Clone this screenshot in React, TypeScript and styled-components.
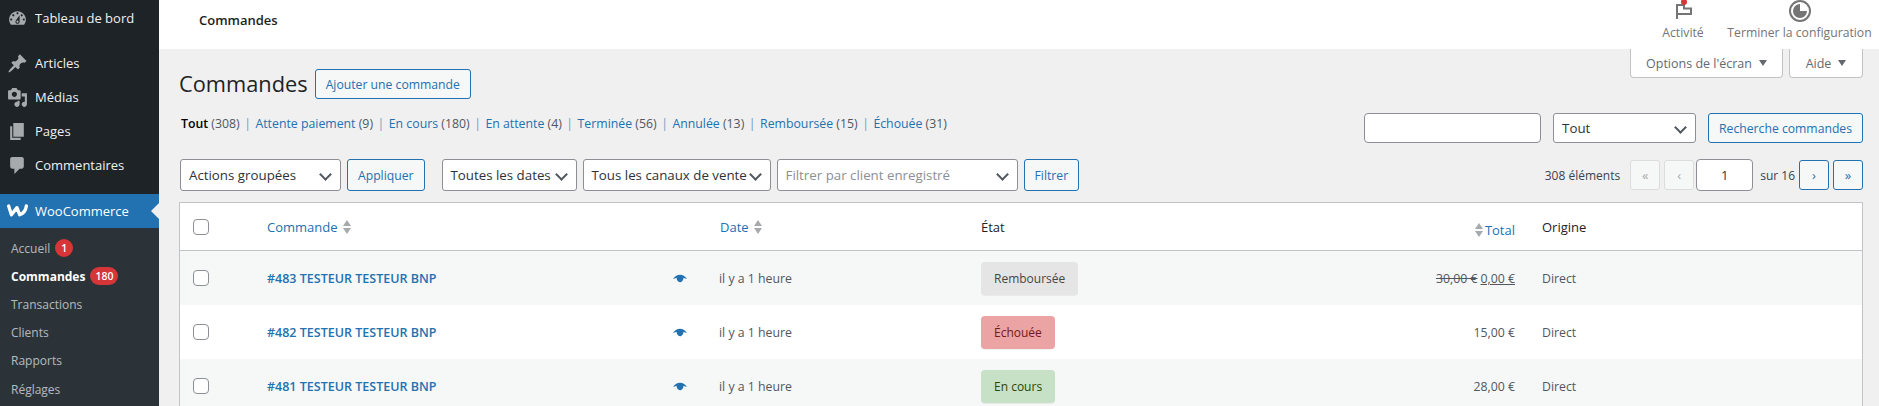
import React from "react";
import styled, { createGlobalStyle } from "styled-components";

const GlobalStyle = createGlobalStyle`
  html, body {
    margin: 0;
    padding: 0;
    height: 406px;
    overflow: hidden;
    background: #f0f0f1;
  }
  * {
    box-sizing: border-box;
  }
  body {
    font-family: "Open Sans", "Noto Sans", sans-serif;
    font-size: 12.5px;
    color: #3c434a;
  }
`;

const menuIcons = {
  dashboard:
    "M3.76 16h12.48c1.1-1.37 1.76-3.11 1.76-5 0-4.42-3.58-8-8-8s-8 3.58-8 8c0 1.89.66 3.63 1.76 5zM10 4c.55 0 1 .45 1 1s-.45 1-1 1-1-.45-1-1 .45-1 1-1zM6 6c.55 0 1 .45 1 1s-.45 1-1 1-1-.45-1-1 .45-1 1-1zm8 0c.55 0 1 .45 1 1s-.45 1-1 1-1-.45-1-1 .45-1 1-1zm-5.37 5.55L12 7v6c0 1.1-.9 2-2 2s-2-.9-2-2c0-.57.24-1.08.63-1.45zM4 10c.55 0 1 .45 1 1s-.45 1-1 1-1-.45-1-1 .45-1 1-1zm12 0c.55 0 1 .45 1 1s-.45 1-1 1-1-.45-1-1 .45-1 1-1zm-5 3c0-.55-.45-1-1-1s-1 .45-1 1 .45 1 1 1 1-.45 1-1z",
  post: "M10.44 3.02l1.82-1.82 6.36 6.35-1.83 1.82c-1.05-.68-2.48-.57-3.41.36l-.75.75c-.92.93-1.04 2.35-.35 3.41l-1.83 1.82-2.41-2.41-2.8 2.79c-.42.42-3.38 2.71-3.8 2.29s1.86-3.39 2.28-3.81l2.79-2.79L4.1 9.36l1.83-1.82c1.05.69 2.48.57 3.4-.36l.75-.75c.93-.92 1.05-2.35.36-3.41z",
  media:
    "M13 11V4c0-.55-.45-1-1-1h-1.67L9 1H5L3.67 3H2c-.55 0-1 .45-1 1v7c0 .55.45 1 1 1h10c.55 0 1-.45 1-1zM7 4.5c1.38 0 2.5 1.12 2.5 2.5S8.38 9.5 7 9.5 4.5 8.38 4.5 7 5.62 4.5 7 4.5zM14 6h5v10.5c0 1.38-1.12 2.5-2.5 2.5S14 17.88 14 16.5s1.12-2.5 2.5-2.5c.17 0 .34.02.5.05V9h-3V6zm-4 8.05V13h2v3.5c0 1.38-1.12 2.5-2.5 2.5S7 17.88 7 16.5 8.12 14 9.5 14c.17 0 .34.02.5.05z",
  page: "M6 15V2h10v13H6zm-1 1h8v2H3V5h2v11z",
  comment: "M5 2h9c1.1 0 2 .9 2 2v7c0 1.1-.9 2-2 2h-2l-5 5v-5H5c-1.1 0-2-.9-2-2V4c0-1.1.9-2 2-2z",
};

const Page = styled.div`
  display: flex;
  width: 1879px;
  height: 406px;
  overflow: hidden;
`;

const Sidebar = styled.nav`
  flex: 0 0 159px;
  background: #1d2327;
  display: flex;
  flex-direction: column;
`;

const MenuItem = styled.div<{ $gap?: number; $top?: number }>`
  flex: none;
  height: 34px;
  display: flex;
  align-items: center;
  gap: 7px;
  padding-left: 7px;
  margin-top: ${(p) => p.$top ?? 0}px;
  margin-bottom: ${(p) => p.$gap ?? 0}px;
  color: #f0f0f1;
  font-size: 13px;
  & svg {
    width: 21px;
    height: 21px;
    fill: #a7aaad;
    flex: none;
  }
`;

const WooItem = styled(MenuItem)`
  position: relative;
  background: #2271b1;
  color: #fff;
  margin-top: 12px;
  & svg {
    fill: none;
    stroke: #fff;
  }
  &::after {
    content: "";
    position: absolute;
    right: 0;
    top: 9px;
    border: 8px solid transparent;
    border-right-color: #f0f0f1;
    border-left-width: 0;
  }
`;

const SubMenu = styled.div`
  flex: 1;
  background: #2c3338;
  padding-top: 6px;
  display: flex;
  flex-direction: column;
`;

const SubItem = styled.div<{ $active?: boolean }>`
  flex: none;
  height: 28.2px;
  display: flex;
  align-items: center;
  gap: 5px;
  padding-left: 11px;
  font-size: 12px;
  color: ${(p) => (p.$active ? "#fff" : "rgba(240, 246, 252, 0.7)")};
  font-weight: ${(p) => (p.$active ? 700 : 400)};
`;

const Count = styled.span`
  min-width: 18px;
  height: 18px;
  padding: 0 5px;
  border-radius: 9px;
  background: #d63638;
  color: #fff;
  font-size: 10.5px;
  font-weight: 600;
  display: inline-flex;
  align-items: center;
  justify-content: center;
`;

const Main = styled.main`
  flex: 1;
  min-width: 0;
  display: flex;
  flex-direction: column;
`;

const Header = styled.header`
  flex: none;
  height: 49px;
  background: #fff;
  display: flex;
  align-items: center;
  justify-content: space-between;
  padding: 0 3px 0 40px;
`;

const HeaderTitle = styled.div`
  font-size: 13px;
  font-weight: 600;
  color: #1e1e1e;
  margin-top: -10px;
`;

const HeaderActions = styled.div`
  display: flex;
  align-self: flex-start;
`;

const HeaderAction = styled.div<{ $w: number }>`
  width: ${(p) => p.$w}px;
  display: flex;
  flex-direction: column;
  align-items: center;
  gap: 3px;
  font-size: 12.2px;
  color: #757575;
  line-height: 16px;
  white-space: nowrap;
  & svg {
    display: block;
  }
`;

const Content = styled.div`
  flex: none;
  padding: 0 16px 0 20px;
`;

const TopRow = styled.div`
  height: 49px;
  display: flex;
  justify-content: space-between;
  align-items: flex-start;
`;

const TitleGroup = styled.div`
  display: flex;
  align-items: center;
  gap: 7px;
  padding-top: 20px;
`;

const Title = styled.h1`
  margin: -2px 0 0;
  font-size: 21.8px;
  font-weight: 400;
  line-height: 29px;
  color: #1d2327;
`;

const OutlineButton = styled.button<{ $h?: number }>`
  height: ${(p) => p.$h ?? 30}px;
  padding: 0 10px;
  border: 1px solid #2271b1;
  border-radius: 3px;
  background: #f6f7f7;
  color: #2271b1;
  font: inherit;
  font-size: 12.2px;
  white-space: nowrap;
`;

const MetaLinks = styled.div`
  display: flex;
  gap: 6px;
`;

const MetaLink = styled.div<{ $w: number }>`
  width: ${(p) => p.$w}px;
  height: 29px;
  background: #fff;
  border: 1px solid #c3c4c7;
  border-top: none;
  border-radius: 0 0 4px 4px;
  display: flex;
  align-items: center;
  justify-content: center;
  gap: 7px;
  color: #646970;
  font-size: 12.5px;
`;

const DownCaret = styled.span`
  width: 0;
  height: 0;
  border-left: 4px solid transparent;
  border-right: 4px solid transparent;
  border-top: 6px solid #646970;
`;

const FilterRow = styled.div`
  margin-top: 15px;
  display: flex;
  justify-content: space-between;
  align-items: center;
`;

const StatusLinks = styled.div`
  display: flex;
  align-items: center;
  padding-left: 2px;
  margin-top: -10px;
  font-size: 12.3px;
  color: #50575e;
  white-space: nowrap;
`;

const StatusLink = styled.a`
  color: #2271b1;
`;

const StatusCurrent = styled.strong`
  color: #000;
  font-weight: 600;
`;

const Sep = styled.span`
  color: #6f9bc0;
  margin: 0 4.5px;
`;

const SearchGroup = styled.div`
  display: flex;
  gap: 12px;
`;

const TextBox = styled.div<{ $w: number; $h?: number; $center?: boolean }>`
  width: ${(p) => p.$w}px;
  height: ${(p) => p.$h ?? 30}px;
  background: #fff;
  border: 1px solid #8c8f94;
  border-radius: 4px;
  display: flex;
  align-items: center;
  justify-content: ${(p) => (p.$center ? "center" : "flex-start")};
  color: #2c3338;
  font-size: 13px;
`;

const PageInput = styled(TextBox)`
  margin-left: -2px;
`;

const SelectBox = styled.div<{ $w: number; $muted?: boolean; $h?: number }>`
  position: relative;
  width: ${(p) => p.$w}px;
  height: ${(p) => p.$h ?? 32}px;
  background: #fff;
  border: 1px solid #8c8f94;
  border-radius: 3px;
  padding-left: 8px;
  display: flex;
  align-items: center;
  font-size: 13.3px;
  color: ${(p) => (p.$muted ? "#8c8f94" : "#2c3338")};
  white-space: nowrap;
  &::after {
    content: "";
    position: absolute;
    right: 10px;
    top: calc(50% - 5px);
    width: 7px;
    height: 7px;
    border-right: 2px solid #50575e;
    border-bottom: 2px solid #50575e;
    transform: rotate(45deg);
  }
`;

const TableNav = styled.div`
  margin-top: 16px;
  height: 32px;
  display: flex;
  align-items: center;
  padding-left: 1px;
`;

const NavGroup = styled.div<{ $ml?: number }>`
  display: flex;
  gap: 6px;
  margin-left: ${(p) => p.$ml ?? 0}px;
`;

const Pagination = styled.div`
  margin-left: auto;
  display: flex;
  align-items: center;
  gap: 4px;
  font-size: 12px;
  color: #3c434a;
`;

const PageButton = styled.div<{ $off?: boolean }>`
  width: 30px;
  height: 30px;
  border: 1px solid ${(p) => (p.$off ? "#dcdcde" : "#2271b1")};
  border-radius: 3px;
  background: #f6f7f7;
  color: ${(p) => (p.$off ? "#a7aaad" : "#2271b1")};
  display: flex;
  align-items: center;
  justify-content: center;
  font-size: 13px;
`;

const PageText = styled.span<{ $mx?: string }>`
  margin: ${(p) => p.$mx ?? "0"};
  white-space: nowrap;
`;

const Table = styled.table`
  margin-top: 11px;
  width: 100%;
  table-layout: fixed;
  border-collapse: separate;
  border-spacing: 0;
  background: #fff;
  border: 1px solid #c3c4c7;
  font-size: 12.3px;
`;

const HeadCell = styled.th<{ $right?: boolean; $dark?: boolean }>`
  height: 48px;
  padding: 0 ${(p) => (p.$right ? 17 : 10)}px 0 10px;
  border-bottom: 1px solid #c3c4c7;
  text-align: ${(p) => (p.$right ? "right" : "left")};
  font-weight: 400;
  font-size: 13px;
  color: ${(p) => (p.$dark ? "#1d2327" : "#2271b1")};
`;

const Row = styled.tr<{ $odd?: boolean }>`
  background: ${(p) => (p.$odd ? "#f6f7f7" : "#fff")};
`;

const Cell = styled.td<{ $right?: boolean }>`
  height: 54px;
  padding: 0 ${(p) => (p.$right ? 17 : 10)}px 0 10px;
  text-align: ${(p) => (p.$right ? "right" : "left")};
  color: #50575e;
`;

const CheckCell = styled(Cell)`
  padding: 0 0 0 13px;
`;

const DateCell = styled(Cell)`
  padding-left: 9px;
`;

const CheckHead = styled(HeadCell)`
  padding: 0 0 0 13px;
`;

const Check = styled.span`
  display: block;
  width: 16px;
  height: 16px;
  background: #fff;
  border: 1px solid #8c8f94;
  border-radius: 4px;
`;

const SortLabel = styled.span<{ $gap?: number }>`
  display: inline-flex;
  align-items: center;
  gap: ${(p) => p.$gap ?? 5}px;
`;

const SortArrows = styled.span`
  display: inline-flex;
  flex-direction: column;
  gap: 2px;
  &::before,
  &::after {
    content: "";
    border-left: 4.5px solid transparent;
    border-right: 4.5px solid transparent;
  }
  &::before {
    border-bottom: 6px solid #a7aaad;
  }
  &::after {
    border-top: 6px solid #a7aaad;
  }
`;

const OrderCell = styled.div`
  display: flex;
  align-items: center;
  justify-content: space-between;
`;

const OrderLink = styled.a`
  color: #2271b1;
  font-weight: 600;
  font-size: 12.5px;
`;

const EyeIcon = styled.svg`
  width: 14px;
  height: 9px;
  fill: #2271b1;
  margin-right: 13px;
`;

const pillColors = {
  refunded: ["#e5e5e5", "#454545"],
  failed: ["#eba3a3", "#761919"],
  processing: ["#c6e1c6", "#2c4700"],
};

const Pill = styled.span<{ $kind: keyof typeof pillColors }>`
  display: inline-flex;
  align-items: center;
  height: 33px;
  padding: 0 13px;
  border-radius: 4px;
  font-size: 12px;
  background: ${(p) => pillColors[p.$kind][0]};
  color: ${(p) => pillColors[p.$kind][1]};
  box-shadow: 0 1px 0 rgba(0, 0, 0, 0.05);
`;

const StrikeTotal = styled.del`
  margin-right: 3px;
`;

const NewTotal = styled.span`
  text-decoration: underline;
`;

const orders = [
  { id: "#483 TESTEUR TESTEUR BNP", kind: "refunded", label: "Remboursée", total: "0,00 €", old: "30,00 €" },
  { id: "#482 TESTEUR TESTEUR BNP", kind: "failed", label: "Échouée", total: "15,00 €" },
  { id: "#481 TESTEUR TESTEUR BNP", kind: "processing", label: "En cours", total: "28,00 €" },
] as const;

const statusLinks = [
  ["Attente paiement", "(9)"],
  ["En cours", "(180)"],
  ["En attente", "(4)"],
  ["Terminée", "(56)"],
  ["Annulée", "(13)"],
  ["Remboursée", "(15)"],
  ["Échouée", "(31)"],
];

const Icon = ({ d }: { d: string }) => (
  <svg viewBox="0 0 20 20">
    <path d={d} />
  </svg>
);

export default function App() {
  return (
    <>
      <GlobalStyle />
      <Page>
        <Sidebar>
          <MenuItem $top={1} $gap={11}>
            <Icon d={menuIcons.dashboard} />
            Tableau de bord
          </MenuItem>
          <MenuItem>
            <Icon d={menuIcons.post} />
            Articles
          </MenuItem>
          <MenuItem>
            <Icon d={menuIcons.media} />
            Médias
          </MenuItem>
          <MenuItem>
            <Icon d={menuIcons.page} />
            Pages
          </MenuItem>
          <MenuItem>
            <Icon d={menuIcons.comment} />
            Commentaires
          </MenuItem>
          <WooItem>
            <svg viewBox="1 2 19 19">
              <path
                d="M2.500 6.500L5 14.500L10 8L12.500 14.500C15 13.500 18 11 18.500 6.500"
                strokeWidth="3"
                strokeLinejoin="round"
                strokeLinecap="round"
              />
            </svg>
            WooCommerce
          </WooItem>
          <SubMenu>
            <SubItem>
              Accueil <Count>1</Count>
            </SubItem>
            <SubItem $active>
              Commandes <Count>180</Count>
            </SubItem>
            <SubItem>Transactions</SubItem>
            <SubItem>Clients</SubItem>
            <SubItem>Rapports</SubItem>
            <SubItem>Réglages</SubItem>
          </SubMenu>
        </Sidebar>
        <Main>
          <Header>
            <HeaderTitle>Commandes</HeaderTitle>
            <HeaderActions>
              <HeaderAction $w={80}>
                <svg width="24" height="22" viewBox="0 0 24 22">
                  <path d="M6 19V5H13V8.500H20V14H6" fill="none" stroke="#757575" strokeWidth="2" />
                  <circle cx="13" cy="2" r="3" fill="#d63638" />
                </svg>
                Activité
              </HeaderAction>
              <HeaderAction $w={153}>
                <svg width="24" height="22" viewBox="0 0 24 22">
                  <circle cx="12" cy="11" r="10" fill="none" stroke="#757575" strokeWidth="2" />
                  <path d="M12 11H19A7 7 0 1 1 12 4z" fill="#757575" />
                </svg>
                Terminer la configuration
              </HeaderAction>
            </HeaderActions>
          </Header>
          <Content>
            <TopRow>
              <TitleGroup>
                <Title>Commandes</Title>
                <OutlineButton>Ajouter une commande</OutlineButton>
              </TitleGroup>
              <MetaLinks>
                <MetaLink $w={153}>
                  Options de l'écran <DownCaret />
                </MetaLink>
                <MetaLink $w={74}>
                  Aide <DownCaret />
                </MetaLink>
              </MetaLinks>
            </TopRow>
            <FilterRow>
              <StatusLinks>
                <StatusCurrent>Tout</StatusCurrent>&nbsp;(308)
                {statusLinks.map(([name, count]) => (
                  <React.Fragment key={name}>
                    <Sep>|</Sep>
                    <StatusLink>{name}</StatusLink>&nbsp;{count}
                  </React.Fragment>
                ))}
              </StatusLinks>
              <SearchGroup>
                <TextBox $w={177} />
                <SelectBox $w={143} $h={30}>
                  Tout
                </SelectBox>
                <OutlineButton>Recherche commandes</OutlineButton>
              </SearchGroup>
            </FilterRow>
            <TableNav>
              <NavGroup>
                <SelectBox $w={161}>Actions groupées</SelectBox>
                <OutlineButton $h={32}>Appliquer</OutlineButton>
              </NavGroup>
              <NavGroup $ml={17}>
                <SelectBox $w={135}>Toutes les dates</SelectBox>
                <SelectBox $w={188}>Tous les canaux de vente</SelectBox>
                <SelectBox $w={241} $muted>
                  Filtrer par client enregistré
                </SelectBox>
                <OutlineButton $h={32}>Filtrer</OutlineButton>
              </NavGroup>
              <Pagination>
                <PageText $mx="0 6px 0 0">308 éléments</PageText>
                <PageButton $off>«</PageButton>
                <PageButton $off>‹</PageButton>
                <PageInput $w={57} $h={32} $center>
                  1
                </PageInput>
                <PageText $mx="0 0 0 3px">sur 16</PageText>
                <PageButton>›</PageButton>
                <PageButton>»</PageButton>
              </Pagination>
            </TableNav>
            <Table>
              <colgroup>
                <col width={77} />
                <col width={453} />
                <col width={261} />
                <col width={300} />
                <col width={261} />
                <col width={330} />
              </colgroup>
              <thead>
                <tr>
                  <CheckHead>
                    <Check />
                  </CheckHead>
                  <HeadCell>
                    <SortLabel>
                      Commande <SortArrows />
                    </SortLabel>
                  </HeadCell>
                  <HeadCell>
                    <SortLabel>
                      Date <SortArrows />
                    </SortLabel>
                  </HeadCell>
                  <HeadCell $dark>État</HeadCell>
                  <HeadCell $right>
                    <SortLabel $gap={2}>
                      <SortArrows />
                      Total
                    </SortLabel>
                  </HeadCell>
                  <HeadCell $dark>Origine</HeadCell>
                </tr>
              </thead>
              <tbody>
                {orders.map((order, i) => (
                  <Row key={order.id} $odd={i % 2 === 0}>
                    <CheckCell>
                      <Check />
                    </CheckCell>
                    <Cell>
                      <OrderCell>
                        <OrderLink>{order.id}</OrderLink>
                        <EyeIcon viewBox="0 0 20 13">
                          <path d="M0 7C3 3 6 1 10 1s7 2 10 6c-2 0-3.500-.500-5-1.500.3 3-2 6.500-5 6.500S5 8.500 5 5.500C3.500 6.500 2 7 0 7z" />
                        </EyeIcon>
                      </OrderCell>
                    </Cell>
                    <DateCell>il y a 1 heure</DateCell>
                    <Cell>
                      <Pill $kind={order.kind}>{order.label}</Pill>
                    </Cell>
                    <Cell $right>
                      {"old" in order ? (
                        <>
                          <StrikeTotal>{order.old}</StrikeTotal>
                          <NewTotal>{order.total}</NewTotal>
                        </>
                      ) : (
                        order.total
                      )}
                    </Cell>
                    <Cell>Direct</Cell>
                  </Row>
                ))}
              </tbody>
            </Table>
          </Content>
        </Main>
      </Page>
    </>
  );
}
